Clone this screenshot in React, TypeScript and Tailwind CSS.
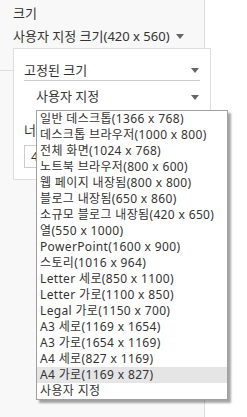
import { useState } from "react";

const sizes = [
  "일반 데스크톱(1366 x 768)",
  "데스크톱 브라우저(1000 x 800)",
  "전체 화면(1024 x 768)",
  "노트북 브라우저(800 x 600)",
  "웹 페이지 내장됨(800 x 800)",
  "블로그 내장됨(650 x 860)",
  "소규모 블로그 내장됨(420 x 650)",
  "열(550 x 1000)",
  "PowerPoint(1600 x 900)",
  "스토리(1016 x 964)",
  "Letter 세로(850 x 1100)",
  "Letter 가로(1100 x 850)",
  "Legal 가로(1150 x 700)",
  "A3 세로(1169 x 1654)",
  "A3 가로(1654 x 1169)",
  "A4 세로(827 x 1169)",
  "A4 가로(1169 x 827)",
  "사용자 지정",
];

const Caret = () => (
  <svg width="8" height="5" viewBox="0 0 8 5" className="shrink-0">
    <path d="M0 0h8L4 5z" fill="#666" />
  </svg>
);

const App = () => {
  const [selected, setSelected] = useState<number>(16);

  return (
    <div
      className="relative w-[247px] h-[417px] bg-white text-[#333] text-[12px] overflow-hidden"
      style={{ fontFamily: "'Noto Sans', 'Noto Sans CJK KR', sans-serif" }}
    >
      {/* sidebar */}
      <div className="w-[205px] h-full bg-[#f8f8f8] border-r border-[#dcdcdc] flex flex-col">
        <div className="h-[71px] border-b border-[#dcdcdc] pl-[13px] pr-[20px] pt-[4px] flex flex-col gap-[5px]">
          <div className="leading-[18px] text-[13px]">크기</div>
          <div className="flex items-center justify-between leading-[18px] text-[13px]">
            <span>사용자 지정 크기(420 x 560)</span>
            <Caret />
          </div>
        </div>
      </div>

      {/* size popover */}
      <div className="absolute left-[13px] top-[48px] w-[198px] h-[132px] bg-white border border-[#dedede] px-[10px]">
        <div className="mt-[12px] h-[20px] border-b border-[#ccc] flex items-center justify-between pr-[1px] text-[13px]">
          <span>고정된 크기</span>
          <Caret />
        </div>
        <div className="mt-[6px] h-[20px] flex items-center justify-between pl-[12px] pr-[1px] text-[13px]">
          <span>사용자 지정</span>
          <Caret />
        </div>
        <div className="mt-[14px] text-[13px] leading-[18px]">너비</div>
        <div className="mt-[6px] h-[23px] w-[120px] border border-[#ccc] bg-white flex items-center px-[6px] text-[13px]">
          420
        </div>
      </div>

      {/* dropdown list */}
      <div className="absolute left-[36px] top-[110px] w-[192px] bg-white border border-[#a0a0a0] shadow-[3px_3px_2px_rgba(0,0,0,0.35)] flex flex-col text-[12px] tracking-[0.35px]">
        {sizes.map((s, i) => (
          <div
            key={s}
            onMouseDown={() => setSelected(i)}
            className={
              "h-[16px] leading-[16px] pl-[3px] whitespace-nowrap " +
              (i === selected ? "bg-[#e5e5e5]" : "")
            }
          >
            {s}
          </div>
        ))}
      </div>
    </div>
  );
};

export default App;
